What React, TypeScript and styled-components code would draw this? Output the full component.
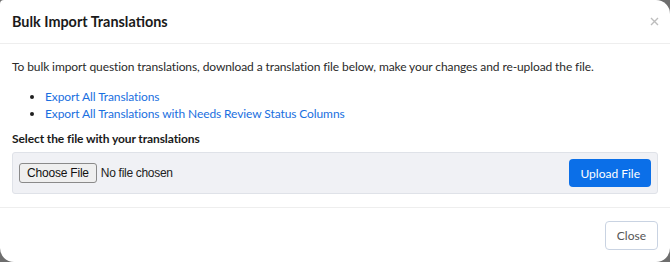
import styled, { createGlobalStyle } from "styled-components";

const GlobalStyle = createGlobalStyle`
    html, body {
        margin: 0;
        padding: 0;
        background: #6e6e6e;
    }
    body {
        font-family: Lato, "Liberation Sans", Arial, sans-serif;
        color: #1f1f1f;
    }
`;

const links = [
    "Export All Translations",
    "Export All Translations with Needs Review Status Columns",
];

function App() {
    return (
        <>
            <GlobalStyle />
            <Modal>
                <Header>
                    <Title>Bulk Import Translations</Title>
                    <CloseX aria-label="close">
                        <svg width="9" height="9" viewBox="0 0 9 9">
                            <path d="M1 1L8 8M8 1L1 8" stroke="#bdbdbd" strokeWidth="1.4" />
                        </svg>
                    </CloseX>
                </Header>
                <Body>
                    <Intro>
                        To bulk import question translations, download a translation file below, make your changes and re-upload the file.
                    </Intro>
                    <LinkList>
                        {links.map((item) => (
                            <li key={item}>
                                <a href="#">{item}</a>
                            </li>
                        ))}
                    </LinkList>
                    <Label>Select the file with your translations</Label>
                    <UploadBox>
                        <FileInput type="file" />
                        <PrimaryButton>Upload File</PrimaryButton>
                    </UploadBox>
                </Body>
                <Footer>
                    <SecondaryButton>Close</SecondaryButton>
                </Footer>
            </Modal>
        </>
    );
}

const Modal = styled.div`
    width: 670px;
    height: 262px;
    background: #fff;
    border-radius: 4px 14px 14px 14px;
    display: flex;
    flex-direction: column;
    box-sizing: border-box;
    overflow: hidden;
`;

const Header = styled.div`
    height: 44px;
    box-sizing: border-box;
    display: flex;
    align-items: center;
    justify-content: space-between;
    padding: 0 12px;
    border-bottom: 1px solid #eeeeee;
`;

const Title = styled.h2`
    margin: 0;
    font-size: 14.4px;
    font-weight: 700;
    color: #1a1a1a;
`;

const CloseX = styled.button`
    border: none;
    background: none;
    padding: 0;
    margin-right: -1px;
    display: flex;
    cursor: pointer;
`;

const Body = styled.div`
    padding: 14px 12px 13px;
    border-bottom: 1px solid #eeeeee;
    font-size: 12px;
    letter-spacing: -0.1px;
`;

const Intro = styled.p`
    margin: 0;
    line-height: 17px;
    color: #2a2a2a;
`;

const LinkList = styled.ul`
    margin: 13px 0 8px;
    padding-left: 33px;
    line-height: 17px;

    a {
        color: #1a6fe0;
        text-decoration: none;
    }
`;

const Label = styled.div`
    font-weight: 700;
    line-height: 17px;
    color: #1a1a1a;
    margin-bottom: 5px;
`;

const UploadBox = styled.div`
    display: flex;
    align-items: center;
    justify-content: space-between;
    background: #f0f1f5;
    border: 1px solid #dfe2e8;
    border-radius: 3px;
    padding: 6px 6px 6px 6px;
`;

const FileInput = styled.input`
    font-family: "Liberation Sans", Arial, sans-serif;
    font-size: 12px;
    letter-spacing: -0.3px;
    color: #222;

    &::file-selector-button {
        font-family: "Liberation Sans", Arial, sans-serif;
        font-size: 12px;
        letter-spacing: -0.2px;
        background: #efefef;
        border: 1px solid #8a8a8a;
        border-radius: 3px;
        padding: 2px 7px;
        margin-right: 4px;
        color: #111;
    }
`;

const PrimaryButton = styled.button`
    font-family: inherit;
    font-size: 12px;
    height: 28px;
    padding: 0 11px;
    background: #0b6fe8;
    color: #fff;
    border: none;
    border-radius: 4px;
`;

const Footer = styled.div`
    flex: 1;
    display: flex;
    justify-content: flex-end;
    align-items: center;
    padding: 0 12px;
`;

const SecondaryButton = styled.button`
    font-family: inherit;
    font-size: 12px;
    height: 29px;
    padding: 0 11px;
    background: #fff;
    color: #555;
    border: 1px solid #c9d3e2;
    border-radius: 4px;
`;

export default App;
